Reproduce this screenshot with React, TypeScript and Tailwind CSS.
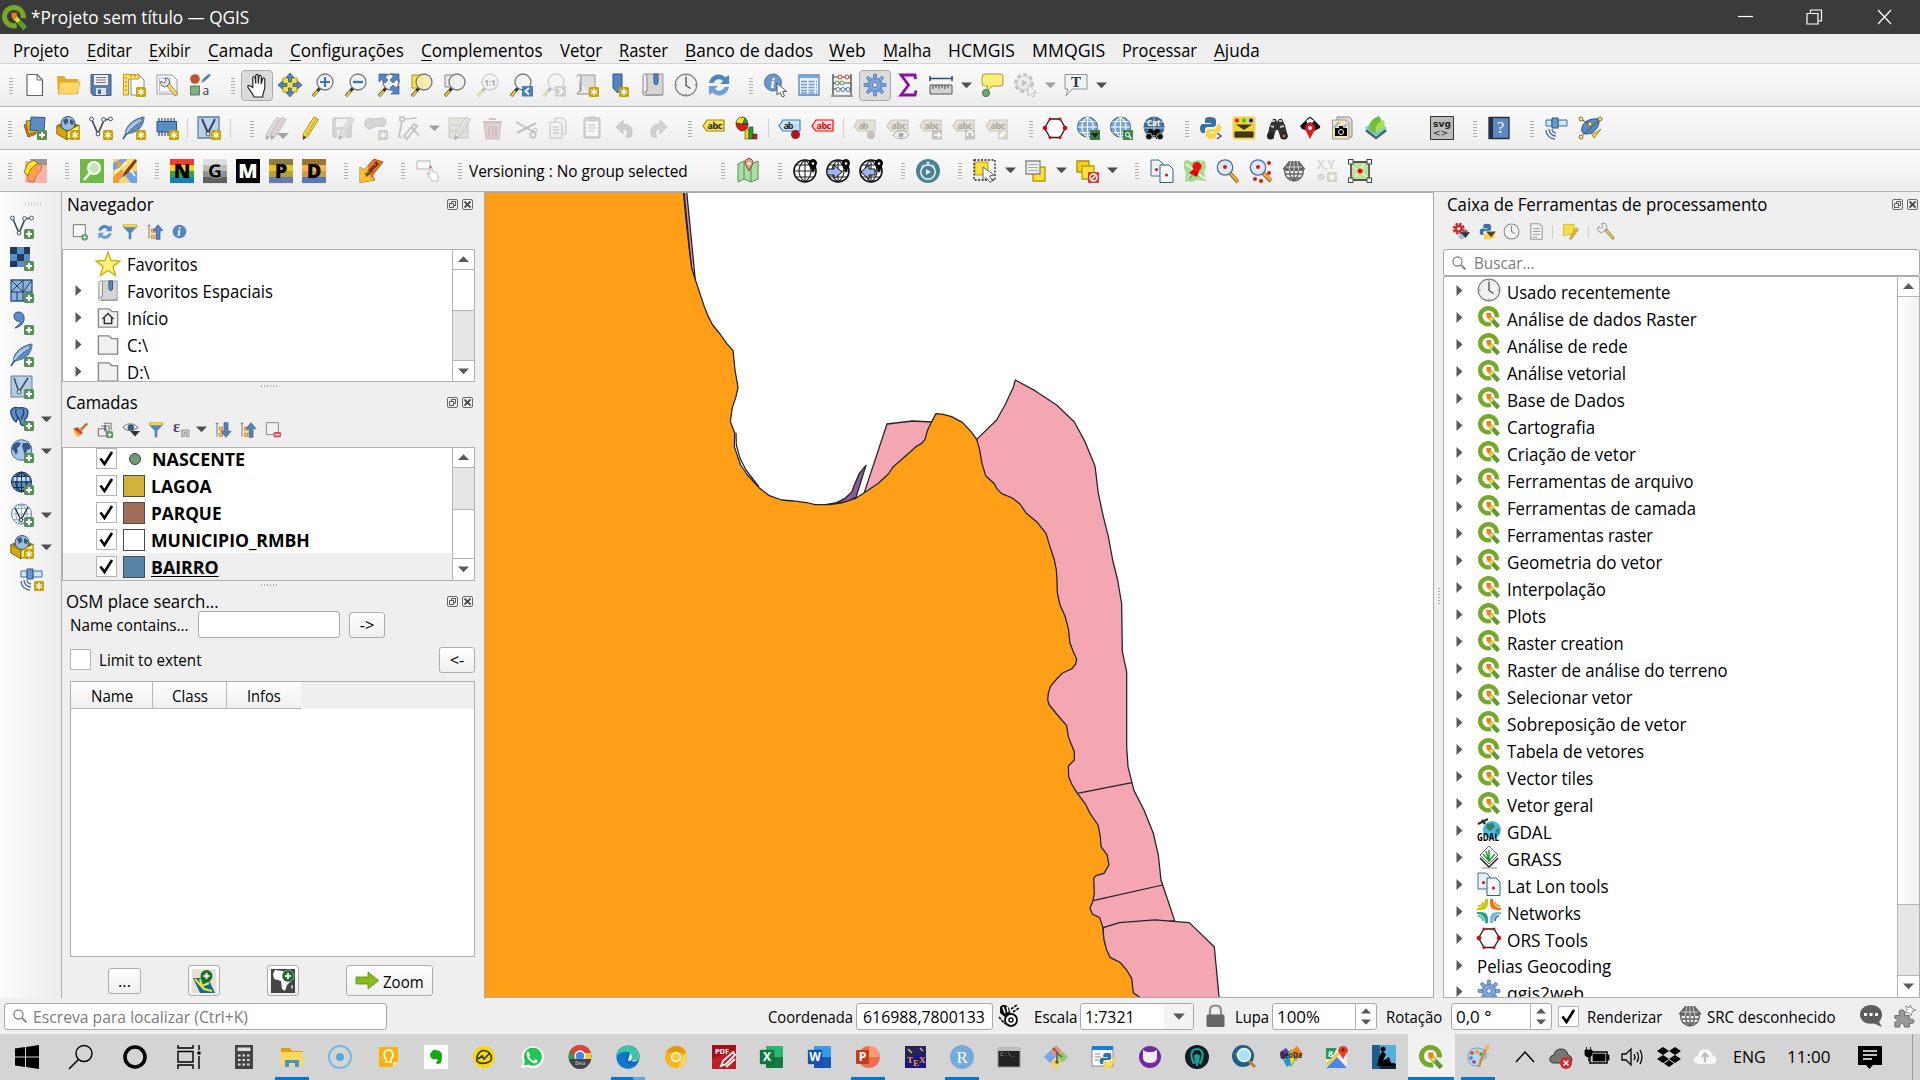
import React, { useLayoutEffect, useRef } from "react";

/* ---------- text ---------- */

type FitProps = { w?: number; children: React.ReactNode; className?: string };

/** Text condensed or widened horizontally to fill the given width. */
function Fit({ w, children, className = "" }: FitProps) {
  const inner = useRef<HTMLSpanElement>(null);
  useLayoutEffect(() => {
    const el = inner.current;
    if (!el || !w) return;
    el.style.transform = `scaleX(${w / el.offsetWidth})`;
  }, [w]);
  return (
    <span className={"inline-block shrink-0 whitespace-pre " + className} style={{ width: w }}>
      <span ref={inner} className="inline-block origin-left whitespace-pre">{children}</span>
    </span>
  );
}

/* ---------- icon primitives ---------- */

type P = { children?: React.ReactNode; s?: number; className?: string };
function I({ children, s = 24, className = "" }: P) {
  return (
    <svg width={s} height={s} viewBox="0 0 24 24" fill="none" className={"shrink-0 overflow-visible " + className}>
      {children}
    </svg>
  );
}

const Star = ({ x = 14, y = 14, c = "#c8a200" }) => (
  <g transform={`translate(${x} ${y})`}>
    <rect width="10" height="10" rx="1.5" fill={c} />
    <path d="M5 1.5V8.500M1.800 3.200L8.200 6.800M8.200 3.200L1.800 6.800" stroke="#fff" strokeWidth="1.300" />
  </g>
);
const Plus = ({ x = 14, y = 14 }) => (
  <g transform={`translate(${x} ${y})`}>
    <rect width="10" height="10" rx="1.500" fill="#55925a" />
    <path d="M5 2V8M2 5H8" stroke="#fff" strokeWidth="2" />
  </g>
);
const Lens = ({ f = "#eef1f3", faded = false }) => (
  <g opacity={faded ? 0.3 : 1}>
    <path d="M9 15L2 23" stroke="#333" strokeWidth="3.200" />
    <path d="M6.500 18L2.300 22.800" stroke="#f0d020" strokeWidth="2" />
    <circle cx="14" cy="9" r="8" fill={f} fillOpacity=".85" stroke="#777" strokeWidth="1.300" />
  </g>
);
const Globe = ({ f = "#7ba6d8", st = "#2f5680", g = "#fff" }) => (
  <g>
    <circle cx="11.500" cy="11" r="10" fill={f} stroke={st} />
    <path d="M1.500 11H21.500M3.500 5.500H19.500M3.500 16.500H19.500M11.500 1V21M11.500 1C4 6 4 16 11.500 21M11.500 1C19 6 19 16 11.500 21" stroke={g} strokeWidth="1.100" />
  </g>
);
const Earth = () => (
  <g>
    <circle cx="11.500" cy="11" r="10.300" fill="#a9c6e4" stroke="#4b6d92" />
    <path d="M3 6L7 3L11 4L9 8L7 9L8 12L6 16L4 12L2 10ZM13 4L18 4L21 8L19 11L17 10L16 15L14 14L13 10L12 7Z" fill="#33587f" />
  </g>
);
const VNodes = ({ c = "#44525e" }) => (
  <g>
    <path d="M2.500 3L9 18L15 4L21 3" stroke={c} strokeWidth="1.700" />
    {[[2.500, 3], [9, 18], [14.500, 3.500], [21.500, 3]].map(([x, y]) => (
      <circle key={x} cx={x} cy={y} r="1.900" fill="#fff" stroke={c} />
    ))}
  </g>
);
const Feather = () => (
  <g>
    <path d="M3 20C3 11 10 3 22 1C22 5 20 13 12 16L5 18Z" fill="#8fb3dc" stroke="#2f5680" />
    <path d="M4 20C6 12 13 6 22 1C22 6 19 13 12 16L5 18Z" fill="#5d89bf" />
    <path d="M1 23C4 15 10 9 19 4" stroke="#dce8f5" strokeWidth="1.200" />
    <path d="M1 23L5 17" stroke="#2f5680" strokeWidth="1.500" />
  </g>
);
const Pencil = ({ a = "#f5dc4a", b = "#b09000", x = 0 }) => (
  <g transform={`translate(${x} 0)`}>
    <path d="M16 1L20.500 3.500L10 20L5 23.500L5.500 17.500Z" fill={a} stroke={b} />
    <path d="M5 23.500L5.400 19.500L8.200 21.300Z" fill="#333" />
    <path d="M18.500 2.500L8 19" stroke={b} strokeWidth=".8" />
  </g>
);
const Tag = ({ f, st, tc, t = "abc", tw = 15 }: { f: string; st: string; tc: string; t?: string; tw?: number }) => (
  <g>
    <path d="M1 10L5 4H22V15H5Z" fill={f} stroke={st} strokeWidth="1.200" />
    <text x="5.500" y="12.500" fontSize="9" fontWeight="700" fontFamily="Open Sans" fill={tc} textLength={tw}>{t}</text>
  </g>
);
const FadedTag = ({ t = "abc", tw = 15 }) => <Tag f="#e3e1d8" st="#c9c7be" tc="#a8a69e" t={t} tw={tw} />;
const BoxPkg = () => (
  <g>
    <path d="M1 9L12 5L23 9L12 15Z" fill="#8a6d00" />
    <circle cx="12" cy="7.500" r="7" fill="#9dbbdc" stroke="#33587f" />
    <path d="M7 4L11 2L12.500 6L9 9ZM14 3L18 5.500L17 9L14 8Z" fill="#33587f" />
    <path d="M.8 9.500L11 15.500V23.800L.8 18Z" fill="#d6a900" stroke="#6b5600" strokeWidth=".8" />
    <path d="M11 15.500L23.200 9V17.500L11 23.800Z" fill="#ffec50" stroke="#6b5600" strokeWidth=".8" />
  </g>
);
const QLogo = ({ s = 24 }: { s?: number }) => (
  <I s={s}>
    <path d="M20.300 12.500A9 8.800 0 1 0 14 19.600" stroke="#77a829" strokeWidth="4.800" />
    <path d="M12 11.500L22.300 22.600" stroke="#5c9b2d" strokeWidth="4.800" />
    <path d="M12 11.500L16 15.800" stroke="#f3d43a" strokeWidth="3.800" />
    <path d="M9 7.500H14.500L13.500 13.500L9.500 12.500Z" fill="#f07d1a" />
  </I>
);
const Down = ({ c = "#4f4f4f", s = 12 }) => (
  <svg width={s} height={s / 2 + 1} viewBox="0 0 12 7" className="shrink-0"><path d="M0 .5H12L6 6.800Z" fill={c} /></svg>
);
const Up = ({ s = 12 }) => (
  <svg width={s} height={s / 2 + 1} viewBox="0 0 12 7" className="shrink-0"><path d="M0 6.500H12L6 .2Z" fill="#5a5a5a" /></svg>
);
const Clock = () => (
  <I>
    <circle cx="12" cy="12" r="10.800" fill="#f0f2f2" stroke="#7b8080" strokeWidth="1.200" />
    <path d="M12 4V12.500L16.500 15.500" stroke="#555" strokeWidth="1.400" />
    <path d="M12 2V3.500M12 20.500V22M2 12H3.500M20.500 12H22" stroke="#777" />
  </I>
);
const Refresh = ({ s = 24 }) => (
  <I s={s}>
    <path d="M2 10C3 4 8 1.500 12 1.500C15 1.500 17 3 18.500 4.500L22 2V11H13L16 8C13 5 8 6 6.500 10Z" fill="#4f86c6" />
    <path d="M22 14C21 20 16 22.500 12 22.500C9 22.500 7 21 5.500 19.500L2 22V13H11L8 16C11 19 16 18 17.500 14Z" fill="#6f9fd6" />
  </I>
);
const Gear = ({ c = "#7fa6d9", st = "#4a77b4", s = 24 }) => (
  <I s={s}>
    {[0, 45, 90, 135, 180, 225, 270, 315].map((a) => (
      <path key={a} d="M10 7L10.800 1H13.200L14 7Z" transform={`rotate(${a} 12 12)`} fill={c} stroke={st} strokeWidth=".8" />
    ))}
    <circle cx="12" cy="12" r="6.500" fill={c} stroke={st} strokeWidth=".8" />
    <circle cx="12" cy="12" r="2.400" fill="#eee" stroke={st} />
  </I>
);
const Hexagon = () => (
  <I>
    <path d="M7 3H17L22.500 12L17 21.500H7L1.500 12Z" stroke="#222" strokeWidth="1.300" fill="#fff" />
    {[[7, 3, 1.500], [17, 3, 1.500], [22, 12, 2.300], [17, 21.500, 1.500], [7, 21.500, 1.500], [2, 12, 2.300]].map(([x, y, r]) => (
      <circle key={`${x}-${y}`} cx={x} cy={y} r={r} fill="#e3000f" />
    ))}
  </I>
);
const Python = ({ s = 24, arrow = true }) => (
  <I s={s}>
    <path d="M11 1C7 1 6 2.500 6 4.500V7H12V8H4C2 8 1 10 1 12.500C1 15 2 17 4 17H6V14C6 12 7 11 9 11H14C16 11 17 10 17 8V4.500C17 2 15 1 11 1Z" fill="#3672a5" />
    <path d="M12 23C16 23 17 21.500 17 19.500V17H11V16H19C21 16 22 14 22 12C22 9.500 21 8 19 8H18V10C18 12 17 13 15 13H10C8 13 7 14 7 16V19.500C7 22 9 23 12 23Z" fill="#ffd343" />
    {arrow && <path d="M18 17L22 20L18 23" stroke="#555" strokeWidth="1.500" />}
  </I>
);
const Pages = () => (
  <I>
    <path d="M1 1H9L13 5V17H1Z" fill="#e9f1f7" stroke="#3d6f94" />
    <path d="M10 6H19L23 10V23.500H10Z" fill="#f3f8fb" stroke="#2f6289" />
    <circle cx="6.500" cy="10.500" r="1.500" fill="#e00" /><circle cx="16.500" cy="16" r="1.500" fill="#e00" />
  </I>
);
const WebGlobe = ({ arrow = "" }) => (
  <I>
    <circle cx="12" cy="12" r="11" fill="#fff" stroke="#111" strokeWidth="1.600" />
    <path d="M1 12H23M3 6H18M3 18H21M12 1V23M12 1C4 7 4 17 12 23M12 1C20 7 20 17 12 23" stroke="#222" strokeWidth="1.100" />
    <path d="M20 14L16.500 6A4 4 0 1 1 23.500 6Z" fill="#000" /><circle cx="20" cy="4.500" r="1.300" fill="#fff" />
    {arrow === "r" && <path d="M1 10H8V6L16 13L8 20V16H1Z" fill="#9db5f5" stroke="#111" />}
    {arrow === "l" && <path d="M16 10H10V6L2 13L10 20V16H16Z" fill="#9db5f5" stroke="#111" />}
  </I>
);
const Letter = ({ c, stripes, fg = "#000", halo = "none" }: { c: string; stripes: string[]; fg?: string; halo?: string }) => (
  <I>
    {stripes.map((s, i) => <rect key={i} x="0" y={(i * 24) / stripes.length} width="24" height={24 / stripes.length + 0.1} fill={s} />)}
    <text x="12" y="19" textAnchor="middle" fontSize="20" fontWeight="900" fontFamily="Open Sans" fill={fg} stroke={halo} strokeWidth=".6">{c}</text>
  </I>
);
const GreyGlobe = () => (
  <I>
    <circle cx="12" cy="12.500" r="9.300" fill="#eee" stroke="#666" strokeWidth="1.500" />
    <path d="M3 15H21M5 19H19M12 9V22M8 9C7 15 8 19 12 22M16 9C17 15 16 19 12 22" stroke="#666" strokeWidth="1.300" />
    <path d="M7 2H17L23.500 10L20 12H4L.5 10Z" fill="#666" />
    <path d="M4 8H20M9 2L7 12M15 2L17 12M12 2V12" stroke="#e8e8e8" strokeWidth=".8" />
  </I>
);
const Sat = ({ badge = false }) => (
  <I>
    <path d="M1 4H7V10H1ZM13 4H22V10H13Z" fill="#d5e5f5" stroke="#3b6da3" /><path d="M7 2H13V12H7Z" fill="#6b98cf" stroke="#2b5487" />
    <path d="M1 14C1 19 5 23 10 23M4 13C4 17 7 20 11 20M7 13C7 15 9 17 11 17" stroke="#4d7099" strokeWidth="1.400" />
    {badge && <Star />}
  </I>
);
const Book = ({ s = 24 }) => (
  <I s={s}>
    <path d="M5 1H22V22H5Z" fill="#d5d5d5" stroke="#999" /><path d="M2 3C2 .5 6 .5 6 3V18C5 18 2 20 2 21Z" fill="#eee" stroke="#888" />
    <path d="M2 21.500C2 23 4 22 22 22" stroke="#888" /><path d="M13 1H17V10L15 12L13 10Z" fill="#5b88bd" stroke="#2b5487" />
  </I>
);
const Binoc = () => (
  <g><path d="M4 23L7 13H10L12 15L14 13H17L21 23H14L13 19H11L10 23Z" fill="#111" /><circle cx="7" cy="20.500" r="3.300" fill="#111" stroke="#eee" strokeWidth=".7" /><circle cx="18" cy="20.500" r="3.300" fill="#111" stroke="#eee" strokeWidth=".7" /></g>
);

/* ---------- toolbar cells ---------- */

const C = ({ children }: { children: React.ReactNode }) => (
  <div className="flex h-full w-[33px] shrink-0 items-center justify-center">{children}</div>
);
const Pressed = ({ children }: { children: React.ReactNode }) => (
  <div className="flex h-full w-[33px] shrink-0 items-center justify-center">
    <div className="flex h-[31px] w-8 items-center justify-center rounded-sm border border-[#a9a9a9] bg-[#dcdcdc]">{children}</div>
  </div>
);
const A = ({ faded = false }) => (
  <div className="flex h-full w-[18px] shrink-0 items-center justify-center">
    <Down c={faded ? "#a0a0a0" : "#4f4f4f"} s={11} />
  </div>
);
function Grip({ w = 24 }: { w?: number }) {
  return (
    <div className="flex h-full shrink-0 items-center justify-end pr-[6px]" style={{ width: w }}>
      <div className="h-[17px] w-1 bg-[radial-gradient(#b0b0b0_0.7px,transparent_0.8px)] bg-[length:2px_3px]" />
    </div>
  );
}
const Sep = () => (
  <div className="flex h-full w-[9.5px] shrink-0 items-center justify-center"><div className="h-5 w-px bg-[#d2d2d2]" /></div>
);

function Toolbar({ children, short = false }: { children: React.ReactNode; short?: boolean }) {
  return (
    <div className={"flex shrink-0 items-center border-b border-[#b4b4b4] bg-gradient-to-b from-[#fbfbfb] to-[#ededed] " + (short ? "h-[42px]" : "h-[43px]")}>
      {children}
    </div>
  );
}

/* ---------- the three toolbars ---------- */

function ToolbarOne() {
  return (
    <Toolbar>
      <Grip w={18.5} />
      <C><I><path d="M4 1.500H14L19.500 7V22.500H4Z" fill="#fff" stroke="#666" strokeWidth="1.200" /><path d="M14 1.500V7H19.500" stroke="#666" /></I></C>
      <C><I><path d="M1 3H8L10 6H22V21H2Z" fill="#e3ab2c" /><path d="M4 9H24L21 21H2Z" fill="#ffd868" stroke="#dba322" strokeWidth=".7" /></I></C>
      <C><I><path d="M2 1.500H22V22.500H4L2 20Z" fill="#5a7fae" stroke="#3f5f88" /><path d="M5 2H19V12H5Z" fill="#f1f1f1" /><path d="M7 4.500H17M7 7H17M7 9.500H17" stroke="#777" /><path d="M7 15H17V22H7Z" fill="#dfe3e8" /><path d="M9 16.500H12V21H9Z" fill="#4a668c" /></I></C>
      <C><I><path d="M9 3H18L22 7V22H9Z" fill="#fff" stroke="#888" /><path d="M1.500 1.500H17V6H6.500V22H1.500Z" fill="#ffe070" stroke="#c39a10" /><path d="M3 5H5M3 9H5M3 13H5M3 17H5M9 2V4M13 2V4" stroke="#a17d00" /><Star /></I></C>
      <C><I><path d="M2 2H17L22 7V21H2Z" fill="#fff" stroke="#999" /><path d="M4.500 5H15V19H4.500Z" stroke="#a9bbe8" /><path d="M11 12L20 23L23 21L14 10Z" fill="#f0d96a" stroke="#7a6a30" strokeWidth=".7" /><path d="M6 8A4 4 0 0 0 12 13L14 11A4 4 0 0 0 10 5L11 8.500L9 10Z" fill="#e8e8e8" stroke="#666" /></I></C>
      <C><I><circle cx="7" cy="6" r="4.800" fill="#c4532d" /><path d="M20.500 1L23 2L17 8L13 10L15 6Z" fill="#4f7fb5" /><path d="M2.500 13H11.500V22H2.500Z" fill="#7fb183" stroke="#54805a" /><text x="14.500" y="22" fontSize="12" fontFamily="Open Sans" fill="#333">a</text></I></C>
      <Grip w={24} />
      <Pressed><I s={25}><path d="M7.500 14V4.500C7.500 3 9.500 3 9.700 4.500L10.300 10V2.500C10.500 1 12.500 1 12.700 2.500V10L13.500 3C14 1.700 15.600 2 15.600 3.500L15.500 10.500L17 5.500C17.500 4.300 19 4.600 19 6V14C19 17 17 18 17 23H8.500C8 20 5 17.500 3 14C2 12 4 11.500 5 12.500Z" fill="#fff" stroke="#222" strokeWidth="1.100" /></I></Pressed>
      <C><I><path d="M5 5H19V19H5Z" fill="#f7e13f" stroke="#b59b00" />{[0, 90, 180, 270].map((a) => <path key={a} d="M12 0L16 4.500H13.500V9H10.500V4.500H8Z" transform={`rotate(${a} 12 12)`} fill="#4f86c6" stroke="#2b5487" strokeWidth=".7" />)}</I></C>
      <C><I><Lens /><path d="M14 4V14M9 9H19" stroke="#3a74b8" strokeWidth="2.200" /></I></C>
      <C><I><Lens /><path d="M9 9H19" stroke="#3a74b8" strokeWidth="2.400" /></I></C>
      <C><I><Lens />{[[2, 1, 0], [22, 1, 90], [22, 21, 180]].map(([x, y, r]) => <path key={r} d="M0 0H8L5.500 2.500L9 6L6 9L2.500 5.500L0 8Z" transform={`translate(${x} ${y}) rotate(${r})`} fill="#4f86c6" stroke="#2f5c90" strokeWidth=".7" />)}</I></C>
      <C><I><path d="M2 2H12V15H2Z" fill="#f8e34a" stroke="#a99000" /><Lens f="#f4ebae" /></I></C>
      <C><I><path d="M2 2H11V14H2Z" fill="#e8e8e8" stroke="#888" /><Lens /></I></C>
      <C><I><Lens faded /><text x="8" y="12.500" fontSize="9" fontWeight="700" fontFamily="Open Sans" fill="#aaa" textLength="12">1:1</text></I></C>
      <C><I><Lens /><path d="M13 13H24V23.500H13Z" fill="#4a7fbf" /><path d="M20 15L16.500 18.300L20 21.500" stroke="#fff" strokeWidth="1.800" /></I></C>
      <C><I><Lens faded /><path d="M13 13H24V23.500H13Z" fill="#cfcfcf" /><path d="M17 15L20.500 18.300L17 21.500" stroke="#fff" strokeWidth="1.800" /></I></C>
      <C><I><path d="M5 2H20V20H5Z" fill="#ddd" stroke="#999" /><path d="M2 4C2 1 6 1 6 4V18C4 18 2 20 2 21H14" fill="#eee" stroke="#888" /><Star /></I></C>
      <C><I><path d="M5 1H14V15L9.500 20L5 15Z" fill="#4f86c6" stroke="#2b5487" /><Star x={11} /></I></C>
      <C><Book /></C>
      <C><Clock /></C>
      <C><Refresh /></C>
      <Grip w={23.5} />
      <C><I><circle cx="9" cy="9.500" r="8.500" fill="#6a97cb" stroke="#4674ab" /><text x="6.500" y="15" fontSize="15" fontWeight="700" fontStyle="italic" fontFamily="Liberation Serif" fill="#fff">i</text><path d="M13 10V22L16 19.500L18.500 24L20.500 23L18.500 18.500H22.500Z" fill="#fff" stroke="#555" /></I></C>
      <C><I><path d="M2 2H22V22H2Z" fill="#e9f1fa" stroke="#5584bd" strokeWidth="1.300" /><path d="M2 2H22V5H2Z" fill="#78a3d8" /><path d="M4 8.500H20M4 11.500H20M4 14.500H20M4 17.500H20M4 20H20" stroke="#6f9cd1" strokeWidth="1.300" strokeDasharray="6 1.500" /></I></C>
      <C><I><path d="M3 1V22M21 1V22" stroke="#444" strokeWidth="1.300" /><path d="M1 23H23M3 4H21M3 10H21M3 16H21" stroke="#444" /><circle cx="10" cy="4" r="2" fill="#fff" stroke="#c33" /><circle cx="17" cy="4" r="2" fill="#fff" stroke="#c33" /><circle cx="7" cy="10" r="2" fill="#fff" stroke="#494" /><circle cx="12" cy="10" r="2" fill="#fff" stroke="#494" /><circle cx="8" cy="16.500" r="2" fill="#fff" stroke="#47a" /><circle cx="13" cy="16.500" r="2" fill="#fff" stroke="#47a" /><circle cx="18" cy="16.500" r="2" fill="#fff" stroke="#47a" /></I></C>
      <Pressed><Gear /></Pressed>
      <C><I><path d="M19.500 6L19 2H5L12.500 12L5 22H19L20 17.500" stroke="#8b0fa0" strokeWidth="2.800" /></I></C>
      <C><I><path d="M1 5.500H23M1 3V8M23 3V8" stroke="#2e4d72" strokeWidth="1.600" /><path d="M1 12H23V21H1Z" fill="#d2d2d2" stroke="#555" /><path d="M4 12V16M7 12V15M10 12V16M13 12V15M16 12V16M19 12V15" stroke="#444" /></I></C>
      <A />
      <C><I><path d="M5 1H20Q23 1 23 4V10Q23 13 20 13H12L6 19L8 13H5Q2 13 2 10V4Q2 1 5 1Z" fill="#fdee77" stroke="#b59b20" /><circle cx="6" cy="20" r="3.600" fill="#6da574" stroke="#42784a" /></I></C>
      <C><I className="opacity-30"><circle cx="11" cy="10" r="8.500" stroke="#555" strokeWidth="3" strokeDasharray="4 2.500" /><circle cx="11" cy="10" r="7" fill="#ddd" stroke="#555" /><path d="M9 6.500V13.500L14.500 10Z" fill="#555" /><path d="M15 12V23L17.500 20.500L20 24L21.500 23L20 19.500H23.500Z" fill="#fff" stroke="#555" /></I></C>
      <A faded />
      <C><I><path d="M1 1.500H23V16H8L2 23L4 16H1Z" fill="#edf3f6" stroke="#8a979e" /><text x="7" y="14" fontSize="15" fontWeight="700" fontFamily="Liberation Serif" fill="#333">T</text></I></C>
      <A />
    </Toolbar>
  );
}

function ToolbarTwo() {
  return (
    <Toolbar>
      <Grip w={18} />
      <C><I><path d="M1 9L9 6L13 18L5 21Z" fill="#e07b2c" stroke="#9c4c10" /><path d="M3 5L13 4L15 16L5 18Z" fill="#dbb02a" stroke="#8c6f10" /><path d="M8 1L22 1.500L21 15L7 14Z" fill="#5d8cc4" stroke="#31588c" /><Plus /></I></C>
      <C><I><BoxPkg /><Star /></I></C>
      <C><I><VNodes /><Star /></I></C>
      <C><I><Feather /><Star /></I></C>
      <C><I><path d="M4 2V20M7 2V20M10 2V20M13 2V20M16 2V20M19 2V20" stroke="#2b5487" strokeWidth="1.200" /><path d="M2 5.500H21.500V16H2Z" fill="#5d8cc4" stroke="#2b5487" /><Star /></I></C>
      <Sep />
      <C><I><path d="M1 1H22V22H1Z" fill="#bcd1e8" stroke="#5b7fa8" strokeWidth="1.300" /><path d="M5 3L11 17L18 3" stroke="#2c4769" strokeWidth="2" /><circle cx="11" cy="18" r="2" fill="#fff" stroke="#2c4769" /><Star /></I></C>
      <Sep />
      <Grip w={25} />
      <C><I className="opacity-40"><Pencil a="#bbb" b="#777" x={-4} /><Pencil a="#ccaaaa" b="#777" x={1} /><path d="M12 17H24L18 23Z" fill="#333" /></I></C>
      <C><I><Pencil /></I></C>
      <C><I className="opacity-40"><path d="M2 2H20V21H2Z" fill="#aaa" stroke="#777" /><path d="M5 3H17V11H5ZM6 14H15V21H6Z" fill="#eee" /><Pencil a="#ccc" b="#888" x={3} /></I></C>
      <C><I className="opacity-40"><path d="M1 9C0 4 4 1 9 3C13 4 17 0 21 3C24 7 20 12 15 10C11 9 9 12 6 13C3 13 2 11 1 9Z" fill="#aaa" stroke="#777" /><Star c="#999580" /></I></C>
      <C><I className="opacity-40"><path d="M3 1H7V5H3ZM7 3L20 2M5 5L2 20L4 22M7 20L17 8L20 10L10 23ZM14 10L22 20" stroke="#777" strokeWidth="1.700" /></I></C>
      <A faded />
      <C><I className="opacity-40"><path d="M1 2H20V22H1ZM1 9H20M1 15H20" fill="#c9ccb8" stroke="#888" /><Pencil a="#ddd" b="#777" x={2} /></I></C>
      <C><I className="opacity-40"><path d="M3 7H20L18 23H5Z" fill="#bf9a9a" stroke="#977" /><path d="M2 6H21M8 3H15M8 10V20M12 10V20M15 10V20" stroke="#977" strokeWidth="2" /></I></C>
      <C><I className="opacity-40"><path d="M2 6L20 16M3 17L22 7" stroke="#777" strokeWidth="2" /><circle cx="19" cy="19" r="2.700" stroke="#777" strokeWidth="1.500" /><circle cx="21" cy="14" r="2" stroke="#777" /></I></C>
      <C><I className="opacity-40"><path d="M8 2H16L19 5V18H8Z" fill="#eee" stroke="#777" /><path d="M3 6H12L15 9V22H3Z" fill="#eee" stroke="#777" /><path d="M6 11H12M6 14H12M6 17H12" stroke="#777" /></I></C>
      <C><I className="opacity-40"><path d="M4 2H20V22H4Z" fill="#aaa" stroke="#777" /><path d="M6 5H18V20H6Z" fill="#fff" /><path d="M9 1H15V5H9ZM8 9H16M8 12H16M8 15H14" stroke="#777" /></I></C>
      <C><I className="opacity-35"><path d="M3 11L10 4V8C17 8 21 12 18 21H13C16 16 14 13 10 13V18Z" fill="#888" stroke="#777" /></I></C>
      <C><I className="opacity-35"><path d="M21 11L14 4V8C7 8 3 12 6 21H11C8 16 10 13 14 13V18Z" fill="#999" stroke="#777" /></I></C>
      <Grip w={23.5} />
      <C><I><Tag f="#f8e14c" st="#a18c10" tc="#222" /></I></C>
      <C><I><path d="M7 1A7 7 0 0 1 13 8L7 8Z" fill="#1fa51f" stroke="#222" strokeWidth=".6" /><path d="M1 7A6 6 0 0 1 10 2L7 9Z" fill="#f8df20" stroke="#222" strokeWidth=".6" /><path d="M1 7L7 8L13 8C13 12 11 15 7 15C3 14 1 11 1 7Z" fill="#e01818" stroke="#222" strokeWidth=".6" /><path d="M10 13H14V23H10Z" fill="#f4d30c" stroke="#222" strokeWidth=".5" /><path d="M14 11H18V23H14Z" fill="#1e9e2c" stroke="#222" strokeWidth=".5" /><path d="M18 18H22V23H18Z" fill="#e01818" stroke="#222" strokeWidth=".5" /></I></C>
      <Sep />
      <C><I><Tag f="#cfe3fb" st="#2a86d8" tc="#222" t="ab" tw={10} /><path d="M17.500 8V17" stroke="#c9d3dd" strokeWidth="3" /><circle cx="17.500" cy="18.500" r="4.500" fill="#b0161c" /></I></C>
      <C><I><Tag f="#fde0e0" st="#f00" tc="#e00000" /></I></C>
      <Sep />
      <C><I><FadedTag t="ab" tw={10} /><circle cx="18" cy="19" r="4" fill="#c9bcbc" /></I></C>
      <C><I><FadedTag /><path d="M7 19C11 13 19 13 23 19C19 24 11 24 7 19Z" fill="#eee" stroke="#aaa" /><circle cx="15" cy="19" r="2.500" fill="#aaa" /></I></C>
      <C><I><FadedTag /><path d="M13 14H23V23.500H13Z" fill="#c4c3bd" /><path d="M15 19H21M19 16.500L21.500 19L19 21.500" stroke="#fff" strokeWidth="1.500" /></I></C>
      <C><I><FadedTag /><path d="M13 14H23V23.500H13Z" fill="#c4c3bd" /><path d="M16 20A2.700 2.700 0 1 1 20 20" stroke="#fff" strokeWidth="1.500" /></I></C>
      <C><I><FadedTag /><path d="M13 14H23V23.500H13Z" fill="#d8d5c8" /><path d="M15 21L20 16" stroke="#fff" strokeWidth="2.500" /></I></C>
      <Grip w={25} />
      <C><Hexagon /></C>
      <C><I><Globe /><path d="M14 14H24V24H14Z" fill="#3e7a48" /><path d="M15 17H23L19 22Z" fill="#222" /></I></C>
      <C><I><Globe /><path d="M14 14H24V24H14Z" fill="#3f8a4c" /><circle cx="18.500" cy="18.500" r="2" stroke="#fff" /><path d="M20 20L22.500 22.500" stroke="#fff" strokeWidth="1.500" /></I></C>
      <C><I><circle cx="12" cy="11" r="10.500" fill="#46698f" /><path d="M3 6H21M2 12H22M12 1V20" stroke="#b5cbe4" /><text x="5" y="10" fontSize="8" fontWeight="700" fontFamily="Open Sans" fill="#fff">Cat</text><Binoc /></I></C>
      <Grip />
      <C><Python /></C>
      <C><I><rect x=".5" y=".5" width="23" height="23" rx="3" fill="#efd33e" /><circle cx="5" cy="4.500" r="2" fill="#e11" /><circle cx="12" cy="4.500" r="2" fill="#1d1" /><circle cx="19" cy="4.500" r="2" fill="#11e" /><path d="M4 8.500H20L12 14Z" fill="#403a10" /><path d="M3 16H21V21H3Z" fill="#403a10" stroke="#222" /></I></C>
      <C><I><path d="M2 21L5 9L8 3H11L12 6L14 3H17L20 9L23 21L16 23L13 14H11L8 23Z" fill="#333" /><circle cx="5.500" cy="20" r="3.500" fill="#222" /><circle cx="19" cy="20" r="3.500" fill="#222" /><circle cx="19" cy="20" r="1.700" fill="#c06820" /><path d="M7 5H10M14 5H17M6 10L9 11M15 11L19 10" stroke="#bbb" strokeWidth="2" /></I></C>
      <C><I><path d="M2 10L10 2Q12 0 14 2L22 10Q23 12 20 13L14 16L4 13Z" fill="#111" /><path d="M8 5L12 2L16 5L14 7L12 6L10 8Z" fill="#fff" /><path d="M12 23L7.500 14A5 5 0 1 1 16.500 14Z" fill="#e8141c" /><circle cx="12" cy="12" r="2" fill="#fff" /></I></C>
      <C><I><path d="M6 1H18L21 4V21H6Z" fill="#ddd" stroke="#888" /><path d="M1.500 4H15L18 7V23H1.500Z" fill="#f8e2b6" stroke="#998" /><path d="M3 12L8 6M4 20L16 8" stroke="#89b7d8" strokeWidth="2" /><path d="M4 12H16V20H4ZM8 10H12V12H8Z" fill="#000" /><circle cx="10" cy="16" r="2.500" stroke="#fff" /></I></C>
      <C><I><path d="M1 15L12 23.500L23 15L19 12H5Z" fill="#3c5c66" /><path d="M1 12L12 21L23 12L12 4Z" fill="#74c5cf" /><path d="M6 15C3 7 9 2 15 0C20 7 19 14 10 17Z" fill="#6dbf3d" /><path d="M12 17C10 11 14 6 20 4C22 10 19 15 12 17Z" fill="#a9dc5a" /></I></C>
      <div className="w-[33px] shrink-0" />
      <C><I><path d="M.5 .5H23.500V23.500H.5Z" fill="#bcbcbc" stroke="#333" /><text x="3" y="11" fontSize="9" fontWeight="700" fontFamily="DejaVu Sans" fill="#222" textLength="18">svg</text><text x="3" y="20" fontSize="9" fontFamily="DejaVu Sans" fill="#222">&lt;&gt;</text></I></C>
      <Grip />
      <C><I><path d="M2 1.500H22V22.500H2Z" fill="#5b8ac3" stroke="#27313c" strokeWidth="1.300" /><path d="M2 1.500H6V22.500H2Z" fill="#26303c" /><text x="10" y="17" fontSize="16" fontFamily="Liberation Serif" fill="#fff">?</text></I></C>
      <Grip w={24.5} />
      <C><Sat /></C>
      <C><I><path d="M4 12C5 6 11 2 21 3C22 9 18 17 9 18C4 18 3 15 4 12Z" fill="#5b8ac3" stroke="#2b5487" /><path d="M3 21L22 3M3 3L12 9" stroke="#456" />{[[3, 3], [22, 3], [12, 8], [3, 21]].map(([x, y]) => <circle key={`${x}-${y}`} cx={x} cy={y} r="2" fill="#f8ea6a" stroke="#7d7430" />)}<path d="M13 17L16 22L23 13L17 17Z" fill="#f4d838" stroke="#7a6500" strokeWidth=".7" /></I></C>
    </Toolbar>
  );
}

function ToolbarThree() {
  return (
    <Toolbar short>
      <Grip w={18} />
      <C><I><path d="M2 2H24V24H2Z" fill="#ffb0a8" /><path d="M6 0H24V6H14Z" fill="#999" /><path d="M1 13L5 4L11 1L15 5L8 10L5 17Z" fill="#fbe808" stroke="#555" strokeWidth=".8" /><path d="M5 22C4 12 10 5 17 5L19 8C18 13 14 14 12 20L11 23Z" fill="#ff9e4a" stroke="#777" strokeWidth=".8" /></I></C>
      <Grip />
      <C><I><path d="M0 0H24V24H0Z" fill="#6fbb45" /><circle cx="14" cy="9" r="6" fill="#c7e6b6" stroke="#fff" strokeWidth="2" /><path d="M10 14L4 21" stroke="#fff" strokeWidth="2.500" /></I></C>
      <C><I><path d="M0 0H24V24H0Z" fill="#f6d96b" /><path d="M0 4L8 0H14L6 9L0 11ZM10 14L18 24H24V12Z" fill="#6fa3e6" /><path d="M0 18L9 10L12 16L5 24H0ZM4 3H9V8H4Z" fill="#f39b31" /><path d="M2 14L14 3M7 22L17 10L22 17" stroke="#fff" strokeWidth="1.500" /><path d="M22 0L12 12L9 19L15 14L24 2Z" fill="#8a3a10" /></I></C>
      <Grip />
      <C><Letter c="N" stripes={["#f03c2d", "#f7ce1b", "#35a24a", "#1580b0"]} /></C>
      <C><Letter c="G" stripes={["#dedede", "#bdbdbd", "#909090", "#606060"]} halo="#ddd" /></C>
      <C><Letter c="M" stripes={["#000"]} fg="#fff" /></C>
      <C><Letter c="P" stripes={["#8c7f3e", "#e8c41f", "#b5a13a", "#6a7ab0"]} /></C>
      <C><Letter c="D" stripes={["#9b742e", "#f3b64e", "#cf9a45", "#5a79b8"]} /></C>
      <Grip />
      <C><I><path d="M1 8L5 11L15 0L24 3L13 17L16 21L1 23.500Z" fill="#f5731c" stroke="#7a3300" strokeWidth=".7" /><path d="M1 8L5 11L9 7L12 18L16 21L1 23.500Z" fill="#f8c02c" /><text transform="translate(8 18) rotate(-48)" fontSize="6.500" fontWeight="700" fontFamily="Liberation Sans" fill="#111" textLength="18">azimut</text></I></C>
      <Grip />
      <C><I><path d="M1 2H14V10H1Z" fill="#fafafa" stroke="#b5b5b5" /><path d="M14 8V15L11 14L16 22H22V16Q22 13 16 12V9Z" fill="#fff" stroke="#bbb" /><circle cx="14.500" cy="8" r="1.200" fill="#d66" /></I></C>
      <Grip />
      <div className="w-[239px] shrink-0 pt-0.5 pl-px"><Fit w={219} className="text-[17px]">Versioning : No group selected</Fit></div>
      <Grip />
      <C><I><path d="M2 5L8 2L15 5L22 2V20L15 23L8 20L2 23Z" fill="#a8e0a4" stroke="#5b8a5a" /><path d="M8 2V20M15 5V23" stroke="#5b8a5a" /><path d="M13 12L9.500 5.500A4 4 0 1 1 16.500 5.500Z" fill="#f0a080" stroke="#7a4a35" /><circle cx="13" cy="4.500" r="1.500" fill="#fff" /></I></C>
      <Grip />
      <C><WebGlobe /></C>
      <C><WebGlobe arrow="r" /></C>
      <C><WebGlobe arrow="l" /></C>
      <Grip />
      <C><I><circle cx="12" cy="12" r="12" fill="#4a8291" /><circle cx="12" cy="13" r="7.200" stroke="#d7e9ec" strokeWidth="1.700" /><path d="M10.500 3.500H13.500M12 4V6M6 6.500L7.500 8M18 6.500L16.500 8" stroke="#d7e9ec" strokeWidth="1.600" /><path d="M10 10V16L15 13Z" fill="#d7e9ec" /></I></C>
      <Grip />
      <C><I><path d="M2 3H15V16H2Z" fill="#f8df3c" stroke="#b89b00" /><path d="M1 1H22V21H1Z" stroke="#222" strokeDasharray="2 1.500" strokeWidth="1.300" /><path d="M10 8V21L13.500 18.500L17 23.500L19.500 22L16.500 17L21 16Z" fill="#fff" stroke="#666" /></I></C>
      <A />
      <C><I><path d="M9 8H21V22H9Z" fill="#f8df3c" stroke="#b89b00" strokeWidth="1.400" /><path d="M2 2H16V15H2Z" fill="#eef0f0" stroke="#888" strokeWidth="1.400" /><path d="M4 5.500H14M4 8.500H14M4 11.500H14" stroke="#aaa" /></I></C>
      <A />
      <C><I><path d="M2 2H14V13H2Z" fill="#f0d21e" stroke="#a98f00" strokeWidth="1.300" /><path d="M7 7H19V20H7Z" fill="#f8df3c" stroke="#b89b00" strokeWidth="1.300" /><rect x="13" y="13" width="11" height="11" rx="1" fill="#e0353b" /><circle cx="18.500" cy="18.500" r="3.500" stroke="#fff" strokeWidth="1.400" /><path d="M16 21L21 16" stroke="#fff" strokeWidth="1.400" /></I></C>
      <A />
      <Grip />
      <C><Pages /></C>
      <C><I><path d="M1 2L5 1L9 3L14 1L22 2L23 8L21 13L23 22L14 21L9 23L2 22L3 14L1 9Z" fill="#a5d98c" /><path d="M3 5L22 20M5 20L18 3" stroke="#e7f5d8" strokeWidth="2" /><path d="M11 10L6 14L14 18L16 12Z" fill="#d00" /><path d="M10 15L6 20" stroke="#888" strokeWidth="1.500" /><circle cx="14" cy="7.500" r="4.500" fill="#ee1111" /></I></C>
      <C><I><path d="M13 13L22 23" stroke="#8a5a10" strokeWidth="4" /><path d="M14 14L22 22.500" stroke="#f1a93a" strokeWidth="2.500" /><circle cx="9" cy="8.500" r="7.700" fill="#dbe9fb" stroke="#4d6f98" strokeWidth="1.300" /><circle cx="9" cy="8" r="2" fill="#e11" /></I></C>
      <C><I><path d="M13 13L22 22" stroke="#8a5a10" strokeWidth="4" /><path d="M14 14L22 21.500" stroke="#f1a93a" strokeWidth="2.500" /><circle cx="9" cy="8.500" r="7.700" fill="#dbe9fb" stroke="#4d6f98" strokeWidth="1.300" />{[[9, 8], [20, 4], [6, 20], [12, 22], [20, 14]].map(([x, y]) => <circle key={`${x}-${y}`} cx={x} cy={y} r="2" fill="#e11" />)}</I></C>
      <C><GreyGlobe /></C>
      <C><I className="opacity-60"><text x="2" y="10" fontSize="12" fontWeight="700" fontFamily="Open Sans" fill="#c5c5c5" textLength="18">X,Y</text><circle cx="6" cy="18" r="2.800" fill="#d5d5d5" stroke="#aaa" /><Star c="#c2bfae" x={12} y={13} /></I></C>
      <C><I><path d="M3 3H21V21H3Z" fill="#b9e49c" stroke="#555" strokeWidth="1.800" /><path d="M5 8L19 18M7 18L16 5" stroke="#e8f5d8" strokeWidth="1.500" />{[[0.5, 0.5], [19, 0.5], [0.5, 19], [19, 19]].map(([x, y]) => <rect key={`${x}-${y}`} x={x} y={y} width="4.500" height="4.500" fill="#fff" stroke="#444" />)}<circle cx="12" cy="12" r="2.500" fill="#f00" /></I></C>
    </Toolbar>
  );
}

/* ---------- title and menu ---------- */

const menus: [string, number, number, number][] = [
  ["Projeto", 3, 56, 17.5], ["Editar", 0, 45, 17.5], ["Exibir", 0, 42, 17], ["Camada", 0, 65, 17], ["Configurações", 0, 114, 17],
  ["Complementos", 0, 122, 17], ["Vetor", 3, 42, 16.5], ["Raster", 0, 49, 17], ["Banco de dados", 0, 128, 16.5], ["Web", 0, 37, 17],
  ["Malha", 0, 48, 17], ["HCMGIS", -1, 67, 17], ["MMQGIS", -1, 73, 17], ["Processar", 3, 75, 17], ["Ajuda", 0, 46, 0],
];

function TitleBar() {
  return (
    <div className="flex h-[34px] shrink-0 items-center bg-[#3b3b3b] text-white">
      <div className="ml-0.5"><QLogo s={25} /></div>
      <Fit w={218} className="ml-1 mt-px text-[17.5px]">*Projeto sem título — QGIS</Fit>
      <div className="flex-1" />
      <svg width="155" height="16" viewBox="-5 0 155 16" className="mr-[28px] shrink-0" fill="none" stroke="#fff" strokeWidth="1.2">
        <path d="M-4 7.500H11" />
        <path d="M65 4.500H76V15H65ZM68.500 4.500V1H79.500V12H76" />
        <path d="M136 1L149 15M149 1L136 15" />
      </svg>
    </div>
  );
}

function MenuBar() {
  return (
    <div className="flex h-[30px] shrink-0 items-center border-b border-[#d4d4d4] bg-[#efefef] pl-[13px] pt-[3px] text-[17.5px]">
      {menus.map(([t, u, w, gap]) => (
        <div key={t} className="shrink-0" style={{ marginRight: gap }}>
          <Fit w={w}>
            {u < 0 ? t : <>{t.slice(0, u)}<span className="underline decoration-1 underline-offset-[3px]">{t[u]}</span>{t.slice(u + 1)}</>}
          </Fit>
        </div>
      ))}
    </div>
  );
}

/* ---------- left side ---------- */

function SideTool({ children, arrow = false }: { children: React.ReactNode; arrow?: boolean }) {
  return (
    <div className="flex h-8 w-full shrink-0 items-center pl-[10px]">
      {children}
      {arrow && <div className="ml-[7px]"><Down s={11} /></div>}
    </div>
  );
}

function SideBar() {
  return (
    <div className="flex w-[62px] shrink-0 flex-col overflow-hidden border-r border-[#b0b0b0] bg-gradient-to-r from-[#fcfcfc] to-[#ececec]">
      <div className="ml-6 mt-[10px] h-1 w-[17px] shrink-0 bg-[radial-gradient(#b0b0b0_0.7px,transparent_0.8px)] bg-[length:3px_2px]" />
      <div className="h-[5px] shrink-0" />
      <SideTool><I><VNodes /><Plus /></I></SideTool>
      <SideTool><I><path d="M0 0H20V20H0Z" fill="#5d8cc4" /><path d="M0 0H7V7H0ZM14 0H20V7H14ZM7 7H14V14H7ZM0 14H7V20H0Z" fill="#1e3a5f" /><Plus /></I></SideTool>
      <SideTool><I><path d="M1 1H22V22H1Z" fill="#8db1da" stroke="#2b5487" strokeWidth="1.300" /><path d="M1 13H22M13 1V22M1 1L13 13M13 1L1 13M13 13L22 1M7 13V22" stroke="#1f3f66" /><Plus /></I></SideTool>
      <SideTool><I><path d="M4 5C4 0 13 -1 14 6C15 12 10 16 5 17C10 13 11 11 10 10C7 11 4 9 4 5Z" fill="#5d8cc4" stroke="#2b5487" /><Plus /></I></SideTool>
      <SideTool><I><Feather /><Plus /></I></SideTool>
      <SideTool><I><path d="M1 1H22V22H1Z" fill="#b9cde2" stroke="#5b7fa8" /><path d="M4 3L9 17L18 3" stroke="#35526f" strokeWidth="1.600" /><circle cx="9" cy="17" r="2" fill="#fff" stroke="#35526f" /><Plus /></I></SideTool>
      <SideTool arrow><I><path d="M1 3C3 0 7 0 9 1C13 0 17 1 18 4C18 8 17 11 15 12V17C13 20 10 18 10 14L8 11L6 15C2 12 0 6 1 3Z" fill="#5d8cc4" stroke="#24466e" strokeWidth="1.300" /><path d="M6 2C5 8 7 10 9 11M13 2C15 6 13 9 11 12" stroke="#1f3f66" strokeWidth="1.200" /><Plus /></I></SideTool>
      <SideTool arrow><I><Earth /><Plus /></I></SideTool>
      <SideTool><I><Globe f="#5d8cc4" st="#17324f" g="#17324f" /><path d="M4 6H19V10H4Z" fill="#c7dcf2" /><path d="M11.500 1V20M7 3V19M16 3V19" stroke="#17324f" /><Plus /></I></SideTool>
      <SideTool arrow><I><Globe f="#fff" st="#4d80b8" g="#8bb0d8" /><path d="M5 5L11 17L18 4" stroke="#333" strokeWidth="1.400" /><circle cx="11" cy="17" r="1.600" fill="#fff" stroke="#333" /><Plus /></I></SideTool>
      <SideTool arrow><I><BoxPkg /><Star /></I></SideTool>
      <div className="pl-[10px]"><SideTool><Sat badge /></SideTool></div>
    </div>
  );
}

function DockButtons() {
  const cls = "flex h-[11px] w-[11px] items-center justify-center rounded-[2px] border border-[#6a6a6a]";
  return (
    <div className="flex gap-1">
      <div className={cls}><svg width="7" height="7" viewBox="0 0 7 7" fill="none" stroke="#555"><path d="M2.500 2.500V.5H6.500V4.500H4.500M.5 2.500H4.500V6.500H.5Z" /></svg></div>
      <div className={cls}><svg width="7" height="7" viewBox="0 0 7 7" stroke="#444" strokeWidth="1.800"><path d="M.5 .5L6.500 6.500M6.500 .5L.5 6.500" /></svg></div>
    </div>
  );
}

function DockTitle({ t, w, className = "" }: { t: string; w: number; className?: string }) {
  return (
    <div className={"flex h-6 shrink-0 items-center justify-between " + className}>
      <Fit w={w} className="text-[18px]">{t}</Fit>
      <div className="-mt-px"><DockButtons /></div>
    </div>
  );
}

const Small = ({ children, w = 25 }: { children: React.ReactNode; w?: number }) => (
  <div className="flex shrink-0 items-center" style={{ width: w }}>{children}</div>
);
const Funnel = () => <I s={16}><path d="M2 2H22V5L14 13V23H10V13L2 5Z" fill="#4f86c6" /><path d="M2 1H22V5H2Z" fill="#f0dd50" stroke="#a99000" strokeWidth=".7" /></I>;
const TreeIcon = ({ down = false }) => (
  <I s={16}>
    <path d="M1 2H5M3 2V22" stroke="#777" strokeWidth="1.500" /><path d="M7 8H11V12H7ZM7 17H11V21H7Z" fill="#fff" stroke="#f38b17" strokeWidth="2" />
    <path d="M16.500 1L24 10H19.500V23H13.500V10H9Z" transform={down ? "rotate(180 16.5 12)" : ""} fill="#5585bd" stroke="#2f5c90" />
  </I>
);
const Dots = () => (
  <div className="flex h-2 shrink-0 items-center justify-center"><div className="h-1 w-[17px] bg-[radial-gradient(#b0b0b0_0.7px,transparent_0.8px)] bg-[length:3px_4px]" /></div>
);

/** Vertical scroll bar: end buttons with a light and a darker stretch between. */
function Scroll({ parts }: { parts: { h: number; c: string }[] }) {
  return (
    <div className="flex w-[22px] shrink-0 flex-col border-l border-[#b4b4b4] bg-[#f7f7f7]">
      <div className="flex h-5 shrink-0 items-center justify-center border-b border-[#b4b4b4] bg-white"><Up s={11} /></div>
      {parts.map((p, i) => (
        <div key={i} className="border-b border-[#b4b4b4]" style={{ height: p.h, background: p.c }} />
      ))}
      <div className="flex flex-1 items-center justify-center bg-white"><Down c="#5a5a5a" s={11} /></div>
    </div>
  );
}
const Tri = () => <svg width="7" height="11" viewBox="0 0 7 11" className="shrink-0"><path d="M.5 0V11L6.500 5.500Z" fill="#5a5a5a" /></svg>;
const Folder = ({ home = false }) => (
  <I s={22}><path d="M1.500 2H13L16 5H22.500V22H1.500Z" fill="#f0f0f0" stroke="#888" strokeWidth="1.500" />{home && <path d="M6 13L12 7L18 13M8 12V18H16V12" stroke="#333" strokeWidth="1.600" />}</I>
);

const browser: [React.ReactNode, string, number, boolean][] = [
  [<I key="s"><path d="M12 0L15 8.500L24 9L17 14.500L19.500 23.500L12 18.500L4.500 23.500L7 14.500L0 9L9 8.500Z" fill="#fbf07a" stroke="#d0a800" strokeWidth="1.300" /></I>, "Favoritos", 71, false],
  [<Book key="b" s={22} />, "Favoritos Espaciais", 146, true],
  [<Folder key="h" home />, "Início", 41, true],
  [<Folder key="c" />, "C:\\", 21, true],
  [<Folder key="d" />, "D:\\", 23, true],
];

function Browser() {
  return (
    <>
      <DockTitle t="Navegador" w={87} className="mt-[1px] pl-[5px] pr-[2px]" />
      <div className="flex h-[29px] shrink-0 items-center pl-[10px]">
        <Small><I s={16}><path d="M2 1H20V19H2Z" fill="#f7f7f7" stroke="#777" strokeWidth="1.500" /><circle cx="19" cy="20" r="5" fill="#5a9a5f" /><path d="M19 17V23M16 20H22" stroke="#fff" strokeWidth="1.500" /></I></Small>
        <Small><Refresh s={16} /></Small>
        <Small><Funnel /></Small>
        <Small><TreeIcon /></Small>
        <Small><I s={15}><circle cx="12" cy="12" r="11" fill="#5587c4" /><text x="8.500" y="19" fontSize="19" fontStyle="italic" fontWeight="700" fontFamily="Liberation Serif" fill="#fff">i</text></I></Small>
      </div>
      <div className="mt-[3px] flex h-[133px] shrink-0 border border-[#b0b0b0] bg-white">
        <div className="min-w-0 flex-1 overflow-hidden">
          {browser.map(([ic, t, w, tri]) => (
            <div key={t} className="flex h-[27px] items-center pl-[12px]">
              <div className="w-[20px]">{tri && <Tri />}</div>
              <div className="flex w-[26px] justify-center">{ic}</div>
              <Fit w={w} className="ml-[6px] mt-0.5 text-[17.5px]">{t}</Fit>
            </div>
          ))}
        </div>
        <Scroll parts={[{ h: 41, c: "#ffffff" }, { h: 50, c: "#e6e6e6" }]} />
      </div>
    </>
  );
}

const Check = ({ on = true }) => (
  <div className="flex h-[21px] w-[21px] shrink-0 items-center justify-center border border-[#b5b5b5] bg-white">
    {on && <svg width="15" height="15" viewBox="0 0 15 15" fill="none"><path d="M1.500 7.500L5.500 13L13 1" stroke="#000" strokeWidth="2.600" /></svg>}
  </div>
);

const layers: [string, string, number][] = [
  ["NASCENTE", "", 93], ["LAGOA", "#d3b23b", 61], ["PARQUE", "#a26d57", 71], ["MUNICIPIO_RMBH", "#ffffff", 159], ["BAIRRO", "#5584a6", 68],
];

function Layers() {
  return (
    <>
      <DockTitle t="Camadas" w={72} className="mt-[1px] pl-1 pr-[2px]" />
      <div className="flex h-[29px] shrink-0 items-center pl-[10px]">
        <Small><I s={16}><path d="M23 2L13 12" stroke="#b5813a" strokeWidth="4" /><path d="M2 11L9 8L16 15L9 23Z" fill="#e6a93a" /><path d="M2 10L8 8L16 16L14 19Z" fill="#d4452c" /><path d="M2 14L9 22L5 22Z" fill="#f7e04b" /></I></Small>
        <Small w={26}><I s={16}><path d="M2 10H14V21H2ZM6 6H18V17M10 2H21V12" stroke="#777" strokeWidth="1.600" /><path d="M12 4V14" stroke="#456" strokeWidth="2" /><Plus x={14} y={14} /></I></Small>
        <Small><I s={17}><path d="M0 9C5 2 15 2 21 9C15 15 5 15 0 9Z" fill="#eee" stroke="#888" strokeWidth="1.500" /><circle cx="11" cy="9" r="4.500" fill="#345b80" /><path d="M10 14H24L17 22Z" fill="#333" /></I></Small>
        <Small><Funnel /></Small>
        <Small w={23}><I s={16}><text x="0" y="15" fontSize="25" fontWeight="700" fontFamily="Liberation Serif" fill="#6b3c80">ε</text><path d="M13 12H24V22H20V16H17V22H13Z" fill="#ccc" stroke="#777" /></I></Small>
        <Small w={19}><Down s={11} /></Small>
        <Small><TreeIcon down /></Small>
        <Small><TreeIcon /></Small>
        <Small><I s={16}><path d="M2 1H20V19H2Z" fill="#f2f2f2" stroke="#888" strokeWidth="1.500" /><rect x="13" y="15" width="11" height="8" rx="2" fill="#ea4848" /><path d="M15 19H22" stroke="#fff" strokeWidth="2" /></I></Small>
      </div>
      <div className="mt-[3px] flex h-[134px] shrink-0 border border-[#b0b0b0] bg-white">
        <div className="-mt-[3px] min-w-0 flex-1">
          {layers.map(([t, c, w], i) => (
            <div key={t} className={"flex h-[27px] items-center pl-[33px] " + (i === 4 ? "bg-[#efefef]" : "")}>
              <Check />
              {c ? <div className="ml-[6px] h-[22px] w-[22px] shrink-0 border border-[#4b4b4b]" style={{ background: c }} />
                : <div className="ml-[12px] mr-[5px] h-3 w-3 shrink-0 rounded-full border border-[#304a34] bg-[#729b6f]" />}
              <Fit w={w} className="ml-[6px] mt-0.5 text-[17.5px] font-bold">{i === 4 ? <span className="underline decoration-1 underline-offset-2">{t}</span> : t}</Fit>
            </div>
          ))}
        </div>
        <Scroll parts={[{ h: 42, c: "#e6e6e6" }, { h: 49, c: "#ffffff" }]} />
      </div>
    </>
  );
}

const btn = "flex shrink-0 items-center justify-center rounded-[3px] border border-[#adadad] bg-gradient-to-b from-white to-[#efefef]";
const field = "flex shrink-0 items-center rounded-[3px] border border-[#a9a9a9] bg-white";

function PlaceSearch() {
  return (
    <>
      <DockTitle t="OSM place search..." w={153} className="mt-[1px] pl-1 pr-[2px]" />
      <div className="-mt-[3px] flex h-[27px] shrink-0 items-center pl-2 text-[16.5px]">
        <Fit w={119}>Name contains...</Fit>
        <div className={field + " ml-[9px] h-[27px] w-[142px]"} />
        <div className={btn + " ml-[9px] h-[26px] w-9"}>-&gt;</div>
      </div>
      <div className="mt-2 flex h-[27px] shrink-0 items-center pl-2 text-[16.5px]">
        <Check on={false} />
        <Fit w={103} className="ml-2">Limit to extent</Fit>
        <div className={btn + " ml-auto h-[26px] w-9"}>&lt;-</div>
      </div>
      <div className="ml-2 mt-2 flex h-[276px] shrink-0 flex-col border border-[#b0b0b0] bg-white">
        <div className="flex h-[27px] bg-[#efefef] text-[15.5px]">
          {([["Name", 42, "w-[82px] border-r"], ["Class", 36, "w-[74px] border-r"], ["Infos", 34, "w-[74px]"]] as const).map(([t, w, c]) => (
            <div key={t} className={"flex h-full items-center justify-center border-b border-[#b8b8b8] bg-gradient-to-b from-white to-[#efefef] pt-0.5 " + c}><Fit w={w}>{t}</Fit></div>
          ))}
        </div>
      </div>
      <div className="mt-2 flex h-[31px] shrink-0 items-center pl-[46px] text-[16.5px]">
        <div className={btn + " h-[26px] w-[33px]"}>...</div>
        <div className={btn + " ml-[47px] h-[31px] w-8"}>
          <I><path d="M0 0H24V24H0Z" fill="#e7e2cf" /><path d="M1 9L16 9L23 24H8Z" fill="#186a8e" /><path d="M3 10L12 20L20 22M8 10L10 17L17 14" stroke="#e3e83a" strokeWidth="2" /><circle cx="14.500" cy="7" r="6" fill="#197326" /><path d="M14.500 4V10M11.500 7H17.500" stroke="#fff" strokeWidth="2" /></I>
        </div>
        <div className={btn + " ml-[47px] h-[31px] w-8"}>
          <I><path d="M0 0H24V24H0Z" fill="#444" /><path d="M4 1L12 2L18 10L19 13L16 16L14 22L11 20L10 12L3 10L2 5ZM20 17L22 16L21 21Z" fill="#fff" /><circle cx="17" cy="7" r="6" fill="#197326" stroke="#ddd" strokeWidth=".5" /><path d="M17 4V10M14 7H20" stroke="#fff" strokeWidth="2" /></I>
        </div>
        <div className={btn + " ml-[47px] h-[31px] w-[87px] gap-1"}>
          <I><path d="M1 8H13V3L23.500 11.500L13 20V15H1Z" fill="#86bd1c" stroke="#5d8c10" strokeWidth=".8" /></I>
          <Fit w={41} className="mt-0.5">Zoom</Fit>
        </div>
      </div>
    </>
  );
}

/* ---------- map ---------- */

type Pt = [number, number];
const low = (pts: Pt[]): Pt[] => pts.map(([x, y]) => [x + 900, y + 1170]);
const line = (pts: Pt[]) => pts.map(([x, y]) => `${x},${y}`).join(" ");

const shore: Pt[] = [
  [70, 5], [78, 90], [88, 180], [95, 235], [108, 275], [118, 305], [133, 350], [145, 380], [158, 405], [180, 432], [200, 460], [219, 482], [225, 540], [234, 592],
  [228, 620], [217, 652], [211, 695], [224, 728], [223, 770], [233, 800], [242, 825], [262, 855], [297, 893], [328, 917], [365, 930], [400, 933],
  [445, 939], [465, 944], [510, 944], [545, 939], [585, 926], [615, 907], [655, 880], [685, 852], [700, 830], [740, 795], [768, 770], [785, 760],
  [795, 748], [802, 722], [814, 697], [828, 671], [850, 673], [875, 680], [908, 698], [935, 727], [950, 748], [958, 775], [966, 820], [977, 857],
  [1003, 881], [1010, 895], [1025, 911], [1057, 924], [1080, 942], [1098, 969], [1130, 995], [1158, 1030], [1170, 1070], [1183, 1110], [1189, 1140],
  ...low([[291, 0], [292, 38], [300, 75], [315, 108], [325, 145], [330, 190], [340, 215], [350, 238], [347, 252], [336, 266], [308, 279], [290, 297], [271, 320],
    [265, 340], [263, 360], [268, 375], [290, 402], [320, 437], [325, 470], [343, 515], [343, 540], [325, 558], [326, 590], [335, 612], [352, 640],
    [375, 670], [390, 700], [414, 735], [421, 770], [423, 800], [441, 824], [447, 855], [432, 880], [408, 887], [401, 895], [403, 940], [399, 962],
    [390, 985], [397, 1002], [419, 1013], [428, 1040], [432, 1080], [440, 1110], [450, 1132], [480, 1147], [500, 1170], [515, 1195], [520, 1238], [545, 1256]]),
];
const east: Pt[] = [
  [950, 748], [1010, 690], [1035, 645], [1060, 592], [1066, 570], [1125, 602], [1190, 645], [1243, 696], [1275, 755], [1305, 828], [1315, 910],
  [1330, 980], [1345, 1040], [1358, 1110],
  ...low([[473, 0], [485, 72], [487, 215], [500, 275], [500, 500], [504, 560], [516, 608], [522, 632], [552, 690], [580, 760], [595, 825], [603, 900],
    [608, 915], [644, 1022], [400, 1060], [200, 900], [150, 300]]),
];
const south = low([[430, 1043], [478, 1028], [585, 1020], [688, 1028], [763, 1101], [778, 1260], [400, 1260]]);

function MapCanvas() {
  return (
    <div className="w-[950px] shrink-0 border border-[#a9a9a9] bg-white">
      <svg viewBox="485 193 948 804" preserveAspectRatio="none" className="block h-full w-full">
        <g transform="translate(660 190) scale(0.33333)" stroke="#232323" strokeWidth="3.8" strokeLinejoin="round">
          <path d="M72 5L80 5L106 270L95 240Z" fill="#d794a2" />
          <polygon points="613,907 681,702 757,693 816,696 850,760 740,900" fill="#f4a6b3" />
          <polygon points={line(east)} fill="#f4a6b3" />
          <polygon points={line(south)} fill="#f4a6b3" />
          <path d="M1252 1810L1416 1778M1299 2132L1508 2085" />
          <polygon points="500,943 530,938 555,925 575,907 583,885 598,850 618,826 588,922 560,936" fill="#8d5a99" />
          <path d="M228 728L229 765L240 805L258 840L297 891" fill="none" />
          <polygon points={`-540,5 ${line(shore)} -540,2426`} fill="#ff9e17" />
        </g>
      </svg>
    </div>
  );
}

/* ---------- processing toolbox ---------- */

const Gdal = () => (
  <I><circle cx="15" cy="12" r="9" fill="#4fb4e6" /><path d="M10 6L16 5L18 9L13 13L9 10ZM18 12L22 10V17Z" fill="#2f8a4b" /><path d="M1 6L11 1M5 2L8 6" stroke="#333" strokeWidth="2.500" /><text x="0" y="22.500" fontSize="10" fontWeight="700" fontFamily="Open Sans" fill="#000" textLength="22" lengthAdjust="spacingAndGlyphs">GDAL</text></I>
);
const Grass = () => (
  <I><path d="M12 1L21 10L12 19L3 10Z" fill="#fff" stroke="#666" /><path d="M3 13L12 22L21 13" stroke="#222" strokeWidth="1.500" /><path d="M12 17V5M12 16L6 9M12 16L18 9M12 16L9 6" stroke="#1e9e2c" strokeWidth="1.500" /><path d="M5 23H20" stroke="#888" /></I>
);
const Net = () => (
  <I>
    <path d="M11 0V4Q11 11 4 11H0V9Q8 9 8 0Z" fill="#b8cc10" /><path d="M6 3V4Q6 7 1 7" stroke="#e0b820" strokeWidth="2" />
    <path d="M13 0V4Q13 11 20 11H24V9Q16 9 16 0Z" fill="#ee7416" /><path d="M18 3Q18 7 23 7" stroke="#f0a020" strokeWidth="2" />
    <path d="M11 24V20Q11 13 4 13H0V15Q8 15 8 24Z" fill="#2aa08a" /><path d="M1 17Q6 17 6 22" stroke="#5cc0a8" strokeWidth="2" />
    <path d="M13 24V20Q13 13 20 13H24V15Q16 15 16 24Z" fill="#7cb8dc" /><path d="M18 22Q18 17 22 17" stroke="#2f8cc4" strokeWidth="2" />
  </I>
);

const tree: [string, number, React.ReactNode?][] = [
  ["Usado recentemente", 163, <Clock key="k" />], ["Análise de dados Raster", 190], ["Análise de rede", 121], ["Análise vetorial", 119],
  ["Base de Dados", 118], ["Cartografia", 88], ["Criação de vetor", 129], ["Ferramentas de arquivo", 187], ["Ferramentas de camada", 189],
  ["Ferramentas raster", 146], ["Geometria do vetor", 155], ["Interpolação", 99], ["Plots", 39], ["Raster creation", 117],
  ["Raster de análise do terreno", 221], ["Selecionar vetor", 126], ["Sobreposição de vetor", 180], ["Tabela de vetores", 137],
  ["Vector tiles", 86], ["Vetor geral", 86], ["GDAL", 45, <Gdal key="g" />], ["GRASS", 55, <Grass key="r" />], ["Lat Lon tools", 102, <Pages key="p" />],
  ["Networks", 74, <Net key="n" />], ["ORS Tools", 81, <Hexagon key="h" />], ["Pelias Geocoding", 134, null], ["qgis2web", 77, <Gear key="q" />],
];

function SearchIcon({ s = 14 }) {
  return <svg width={s} height={s} viewBox="0 0 14 14" fill="none" stroke="#8a8a8a" strokeWidth="1.300"><circle cx="5.500" cy="5.500" r="4.500" /><path d="M9 9L13.500 13.500" strokeWidth="2" /></svg>;
}

function Toolbox() {
  return (
    <div className="flex min-w-0 flex-1 flex-col">
      <DockTitle t="Caixa de Ferramentas de processamento" w={320} className="mt-[1px] pl-1 pr-[2px]" />
      <div className="flex h-[29px] shrink-0 items-center pl-[10px]">
        <Small w={26}><I s={17}><circle cx="8" cy="8" r="6" stroke="#cf2424" strokeWidth="5" strokeDasharray="3 1.700" /><circle cx="8" cy="8" r="4" stroke="#cf2424" strokeWidth="3" /><circle cx="17" cy="13" r="4" fill="#777" /><circle cx="12" cy="19" r="4" fill="#9fbce8" /><path d="M11 13H24L17.500 21Z" fill="#333" /></I></Small>
        <Small w={24}><I s={17}><path d="M11 1C7 1 6 2.500 6 4.500V7H12V8H4C2 8 1 10 1 12.500C1 15 2 17 4 17H6V14C6 12 7 11 9 11H14C16 11 17 10 17 8V4.500C17 2 15 1 11 1Z" fill="#3672a5" /><path d="M7 23V15H22V20Q20 23 15 23Z" fill="#ffd343" /><path d="M10 12H24L17 20Z" fill="#54461c" /></I></Small>
        <Small><I s={17}><circle cx="12" cy="12" r="10.500" fill="#f4f4f4" stroke="#888" strokeWidth="1.500" /><path d="M12 4V12L17 15" stroke="#888" strokeWidth="1.500" /></I></Small>
        <Small w={24}><I s={17}><path d="M4 1H16L20 5V23H4Z" fill="#f4f4f4" stroke="#999" strokeWidth="1.500" /><path d="M7 8H17M7 12H17M7 16H17M7 20H13" stroke="#999" strokeWidth="1.500" /></I></Small>
        <Small w={10}><div className="h-3 w-px bg-[#ccc]" /></Small>
        <Small w={26}><I s={17}><path d="M2 2H17V16H8L2 18Z" fill="#f7e03f" stroke="#c9ac10" /><path d="M20 7L23 9L14 22L11 23L12 19Z" fill="#e8c53a" stroke="#9a7c10" /></I></Small>
        <Small w={9}><div className="h-3 w-px bg-[#ccc]" /></Small>
        <Small><I s={18}><path d="M10 10L21 22L23 20L13 8Z" fill="#e8c95a" stroke="#7a6420" /><path d="M2 5A4.500 4.500 0 0 0 9 11L11 9A4.500 4.500 0 0 0 6 1L8 5L6 7Z" fill="#eee" stroke="#777" /></I></Small>
      </div>
      <div className={field + " mt-[3px] h-[27px] gap-2 pl-2 text-[16.5px] text-[#7b7b7b]"}>
        <SearchIcon /><Fit w={60} className="mt-px">Buscar...</Fit>
      </div>
      <div className="flex min-h-0 flex-1 border border-t-[#b0b0b0] border-[#b0b0b0] bg-white">
        <div className="min-w-0 flex-1 overflow-hidden">
          {tree.map(([t, w, ic]) => (
            <div key={t} className={"flex items-center pl-[12px] " + (ic === null ? "h-[26px]" : "h-[27px]")}>
              <Tri />
              {ic !== null && <div className="-mt-0.5 ml-[12.5px] flex w-[26px] justify-center">{ic === undefined ? <QLogo s={22} /> : ic}</div>}
              <Fit w={w} className={(ic === null ? "ml-[14px]" : "ml-[5.5px]") + " mt-[3px] text-[17.5px]"}>{t}</Fit>
            </div>
          ))}
        </div>
        <Scroll parts={[{ h: 608, c: "linear-gradient(90deg,#fff,#f1f1f1)" }, { h: 71, c: "#e6e6e6" }]} />
      </div>
    </div>
  );
}

/* ---------- status bar ---------- */

function Spin({ v, w, vw, split }: { v: string; w: number; vw: number; split: number }) {
  return (
    <div className={field + " h-[27px]"} style={{ width: w }}>
      <Fit w={vw} className="ml-1 mt-0.5">{v}</Fit>
      <div className="ml-auto flex h-full flex-col items-center justify-center gap-[5px] border-l border-[#b4b4b4]" style={{ width: split }}><Up s={10} /><Down c="#5a5a5a" s={10} /></div>
    </div>
  );
}

function StatusBar() {
  return (
    <div className="flex h-9 shrink-0 items-center bg-[#efefef] pl-1 text-[16.5px]">
      <div className={field + " h-[27px] w-[383px] gap-[6px] pl-2 text-[#7b7b7b]"}><SearchIcon /><Fit w={215} className="mt-0.5">Escreva para localizar (Ctrl+K)</Fit></div>
      <Fit w={85} className="ml-[381px] mt-0.5">Coordenada</Fit>
      <div className={field + " ml-[3px] h-[27px] w-[137px] pl-[6px]"}><Fit w={122} className="mt-0.5">616988,7800133</Fit></div>
      <div className="-mt-0.5 ml-1"><I><path d="M3 4Q7 -1 12 5L14 12L9 15L3 10Z" fill="#111" /><path d="M6 4L8 10M10 4L11 9" stroke="#fff" strokeWidth="1.500" /><circle cx="14" cy="17" r="6" fill="#fff" stroke="#111" strokeWidth="1.800" /><circle cx="14" cy="17" r="2" stroke="#111" strokeWidth="1.500" /><path d="M14 6L20 2M16 9L22 5M2 14L7 20L12 22" stroke="#111" strokeWidth="1.700" strokeDasharray="3 1" /></I></div>
      <Fit w={43} className="ml-[13px] mt-0.5">Escala</Fit>
      <div className={field + " ml-[3px] h-[27px] w-[114px] overflow-hidden pl-1"}><Fit w={50} className="mt-0.5">1:7321</Fit><div className="ml-auto flex h-full w-[29px] items-center justify-center bg-[#f3f3f3]"><Down c="#5a5a5a" s={12} /></div></div>
      <div className="ml-3"><svg width="19" height="24" viewBox="0 0 19 24" fill="none"><path d="M4 11V6.500Q4 1.500 9.500 1.500Q15 1.500 15 6.500V11" stroke="#8b8b8b" strokeWidth="2.200" /><rect x=".5" y="10.500" width="18" height="12.500" rx="1.500" fill="#666" /></svg></div>
      <Fit w={34} className="ml-[10px] mt-0.5">Lupa</Fit>
      <div className="ml-[3px]"><Spin v="100%" w={105} vw={43} split={21} /></div>
      <Fit w={56} className="ml-[9px] mt-0.5">Rotação</Fit>
      <div className="ml-[9px]"><Spin v="0,0 °" w={101} vw={36} split={21} /></div>
      <div className="ml-[6px]"><Check /></div>
      <Fit w={75} className="ml-2 mt-0.5">Renderizar</Fit>
      <div className="ml-[16px] flex"><GreyGlobe /></div>
      <Fit w={129} className="ml-[5px] mt-0.5">SRC desconhecido</Fit>
      <div className="ml-[23px] flex"><I><path d="M12 1C18 1 23 5 23 10.500C23 14 21 17 20 18L23 23L15 19.500C6 21 1 16 1 10.500C1 5 6 1 12 1Z" fill="#5d5d5d" /><path d="M5 9H8V12H5ZM10.500 9H13.500V12H10.500ZM16 9H19V12H16Z" fill="#fff" /></I></div>
      <div className="ml-[10px] flex"><I s={23}><path d="M2 11H7Q5 5 9 5Q13 5 12 11H17V15Q22 14 22 17Q22 20 17 19V23H12Q12 19 9 19Q7 19 7 23H2V18Q5 17 5 15Q4 14 2 14Z" fill="#999" stroke="#666" /><path d="M18 0L20 4L24 5L20 7L19 11L16 8L12 8L15 5L13 1L17 3Z" fill="#fff" stroke="#888" /></I></div>
    </div>
  );
}

/* ---------- task bar ---------- */

function Task({ children, w = "w-12", run = "", on = false }: { children: React.ReactNode; w?: string; run?: string; on?: boolean }) {
  return (
    <div className={"flex h-full shrink-0 flex-col items-center justify-between " + w + (on ? " bg-[#f1f1f1]" : "")}>
      <div className="h-px" />
      <div className="mt-[2px] flex h-6 items-center">{children}</div>
      <div className={"h-[3px] " + (run || "w-0")} />
    </div>
  );
}
const Office = ({ c, d, l }: { c: string; d: string; l: string }) => (
  <I><path d="M6 1H23V23H6Z" fill={c} /><path d="M6 12H23V23H6Z" fill={d} /><rect x="0" y="5" width="14" height="14" rx="1" fill={d} stroke="#0003" /><text x="7" y="16" textAnchor="middle" fontSize="12" fontWeight="700" fontFamily="Open Sans" fill="#fff">{l}</text></I>
);
const N47 = "w-[46.9px]";

function TaskBar() {
  return (
    <div className="flex h-[46px] shrink-0 items-center bg-[#d4d4d4]">
      <Task w="w-[54px]"><I><path d="M0 3.500L10 2V11.500H0ZM11 2L24 0V11.500H11ZM0 12.500H10V22L0 20.500ZM11 12.500H24V24L11 22Z" fill="#000" /></I></Task>
      <Task w="w-[54px]"><I><circle cx="15" cy="8.500" r="8" stroke="#000" strokeWidth="1.400" /><path d="M9.500 14.500L0 24" stroke="#000" strokeWidth="1.600" /></I></Task>
      <Task w="w-[54px]"><I><circle cx="12" cy="12" r="10" stroke="#000" strokeWidth="3.600" /></I></Task>
      <Task w="w-[54px]"><I><path d="M1 0V3H16V0M1 24V20H16V24M1 6.500H16V17H1ZM22 0V5M22 11V24" stroke="#000" strokeWidth="1.400" /><circle cx="22" cy="8" r="1.800" fill="#000" /></I></Task>
      <Task w="w-[52px]"><I className="translate-x-0.5"><path d="M3 0H21V24H3Z" fill="#444" /><path d="M5.500 2.500H18.500V6H5.500Z" fill="#ddd" /><path d="M6 10.500H18M6 15H18M6 19.500H18" stroke="#ddd" strokeWidth="2" strokeDasharray="2.500 2" /></I></Task>
      <Task run="w-[34px] bg-[#0078d7]"><I><path d="M1 3H10L12 6H23V9H1Z" fill="#e0a110" /><path d="M1 7H23V21H1Z" fill="#ffd75e" /><path d="M5 22V15H19V22H15V18H9V22Z" fill="#3a97dd" /></I></Task>
      <Task><I><circle cx="12" cy="12" r="11" stroke="#6cb8e4" strokeWidth="1.800" /><circle cx="12" cy="12" r="4" fill="#57a9dc" /></I></Task>
      <Task><I><path d="M3 2H22V17L17 22H3Z" fill="#f7b50c" /><path d="M22 17H17V22Z" fill="#fff0b0" /><path d="M10 14C6.500 11 8 5 12.500 5C17 5 18.500 11 15 14V17H10Z" stroke="#fff" strokeWidth="1.600" /></I></Task>
      <Task><I><path d="M0 0H24V24H0Z" fill="#fff" /><path d="M9 5L12 5C16 6 18 7 18 11C18 16 17 19 14 19C11 19 12 16 14 16L13 14C10 15 6 14 6 9Z" fill="#12a815" /></I></Task>
      <Task><I><circle cx="12" cy="12" r="11" fill="#f8d80c" /><path d="M5 16C4 9 9 4 14 6C20 8 21 15 17 17C13 19 7 19 5 16ZM6 14L10 11L12 14L17 9" stroke="#333" strokeWidth="1.600" /></I></Task>
      <Task><I><path d="M1 23L3 17A11 11 0 1 1 8 22Z" fill="#fff" /><path d="M3.500 20.500L5 16A9 9 0 1 1 8.500 19.500Z" fill="#24c355" /><path d="M8 6L10 10L9 12Q11 15 14 16L15 14L18 15.500Q17 19 13 18Q7 15 6.500 9Z" fill="#fff" /></I></Task>
      <Task><I><circle cx="12" cy="12" r="11.500" fill="#555" /><path d="M2 6A11.500 11.500 0 0 1 23 8H12L7 13Z" fill="#d94435" /><path d="M1 11Q1 8 2 6L8 15H1Z" fill="#2ea14e" /><path d="M12 8H23.500V14H16Z" fill="#f5c42f" /><circle cx="12" cy="11" r="5" fill="#4285f4" stroke="#fff" strokeWidth="1.300" /><path d="M1 14H23Q20 24 12 24Q4 24 1 14Z" fill="#444" /><text x="7" y="20" fontSize="5" fontFamily="Open Sans" fill="#ccc">Beta</text></I></Task>
      <Task run="w-[34px] border-r-[12px] border-[#5ba9e8] bg-[#0078d7]"><I><circle cx="12" cy="12" r="11.500" fill="#0f6cbd" /><path d="M1 11C2 3 8 0 14 1C21 2 25 9 23 14C20 17 15 16 15 14C18 9 12 6 8 7Q4 8 1 11Z" fill="#3cc6a4" /><path d="M1 11Q6 5 11 8C7 11 8 18 14 20Q18 21 21 19C14 27 0 24 1 11Z" fill="#1278cf" /><path d="M14 8Q18 12 14.500 15Q17 18 22 15L12 16Z" fill="#e4f2fa" /></I></Task>
      <Task><I><circle cx="12" cy="12" r="11" fill="#f7b41a" /><path d="M2 7Q7 0 14 1Q20 2 22 8H12Z" fill="#e8960c" /><path d="M22 8Q26 18 14 23L18 12Z" fill="#fdd65b" /><circle cx="12" cy="12" r="4.500" fill="#fbc94a" stroke="#fff" strokeWidth="1.300" /></I></Task>
      <Task><I><path d="M0 0H24V24H0Z" fill="#a50d15" /><path d="M0 14L24 4V24H0Z" fill="#bf2028" /><text x="3" y="8.500" fontSize="7.500" fontWeight="700" fontFamily="Open Sans" fill="#fff" textLength="14">PDF</text><path d="M9 21L11 16L21 7L23 10L14 19ZM14 22L23 14" stroke="#fff" strokeWidth="1.800" /></I></Task>
      <Task><Office c="#2cb673" d="#107c41" l="X" /></Task>
      <Task><Office c="#3a9be6" d="#1857b6" l="W" /></Task>
      <Task run="w-[34px] bg-[#0078d7]"><I><circle cx="13" cy="12" r="11" fill="#e8704b" /><path d="M13 1A11 11 0 0 1 24 12H13Z" fill="#ff9a78" /><rect x="0" y="5" width="13" height="14" rx="1" fill="#c43e1c" /><text x="6.500" y="16" textAnchor="middle" fontSize="12" fontWeight="700" fontFamily="Open Sans" fill="#fff">P</text></I></Task>
      <Task w={N47}><I><path d="M2 1H23V23H2Z" fill="#1c1780" /><path d="M2 1H23V8L2 14Z" fill="#28205a" /><path d="M5 4L9 8M17 3L20 6" stroke="#cc3" strokeWidth="1.500" /><text x="4" y="18" fontSize="9" fontWeight="700" fontFamily="Liberation Serif" fill="#e8a126">T<tspan dy="3">E</tspan><tspan dy="-3">X</tspan></text></I></Task>
      <Task w={N47} run="w-[34px] bg-[#0078d7]"><I><circle cx="12" cy="12" r="12" fill="#75aadb" /><text x="6.500" y="18" fontSize="17" fontFamily="Liberation Serif" fill="#fff">R</text></I></Task>
      <Task w={N47}><I><path d="M1 3H23V22H1Z" fill="#222" stroke="#999" /><path d="M1 3H23V6H1Z" fill="#bbb" /><text x="3" y="11" fontSize="6" fontFamily="Liberation Mono" fill="#aaa">C:\_</text></I></Task>
      <Task w={N47}><I><path d="M12 0L18 6L12 12L6 6Z" fill="#e8907c" /><path d="M18 6L24 12L18 18L12 12Z" fill="#8ecb6b" /><path d="M6 6L12 12L6 18L0 12Z" fill="#75a8e8" /><path d="M12 12L18 18L12 24L6 18Z" fill="#f0d468" /><path d="M9 3L13 7V17M13 8L18 12" stroke="#555" strokeWidth="1.500" /><circle cx="13" cy="17" r="1.700" fill="#555" /></I></Task>
      <Task w={N47}><I><path d="M1 2H22V21H1Z" fill="#fff" stroke="#888" /><path d="M1 1H22V5H1Z" fill="#1582d4" /><path d="M4 9H9M4 12H10M4 15H8" stroke="#888" /><g transform="translate(8 7) scale(.72)"><path d="M11 1C7 1 6 2.500 6 4.500V7H12V8H4C2 8 1 10 1 12.500C1 15 2 17 4 17H6V14C6 12 7 11 9 11H14C16 11 17 10 17 8V4.500C17 2 15 1 11 1Z" fill="#3672a5" /><path d="M12 23C16 23 17 21.500 17 19.500V17H11V16H19C21 16 22 14 22 12C22 9.500 21 8 19 8H18V10C18 12 17 13 15 13H10C8 13 7 14 7 16V19.500C7 22 9 23 12 23Z" fill="#ffd343" /></g></I></Task>
      <Task w={N47}><I><circle cx="12" cy="12" r="11" fill="#6f2ca0" /><path d="M5 5L9 7H15L19 5V11Q20 18 12 18Q4 18 5 11Z" fill="#f2ecf6" /></I></Task>
      <Task w={N47}><I><circle cx="12" cy="12" r="12" fill="#111c26" /><path d="M12 4C17 4 19 9 17 14L15 19M12 4C7 4 5 9 7 14L9 19M12 9V21M10 10L11 18M14 10L13 18" stroke="#1b9e90" strokeWidth="2.200" /></I></Task>
      <Task w={N47}><I><circle cx="11" cy="11" r="11" fill="#1d5f86" /><path d="M2 9L8 5L14 8L10 18Z" fill="#3f8c55" /><circle cx="12" cy="10" r="6.500" fill="#a8e2f5" stroke="#eee" strokeWidth="1.500" /><path d="M17 16L23 22" stroke="#c87a30" strokeWidth="3" /></I></Task>
      <Task w={N47}><I><path d="M1 7L7 3L12 9L8 15L2 14Z" fill="#5b3fa8" /><path d="M4 16L12 4L18 12L12 22Z" fill="#2fc45c" /><path d="M5 17L10 8L13 18L8 22Z" fill="#2b8fe8" /><path d="M10 8L14 5L15 16L12 20Z" fill="#f4e02a" /><path d="M12 6L18 1L24 9L17 16Z" fill="#f08418" /><text x="1" y="13" fontSize="9" fontWeight="700" fontFamily="Open Sans" fill="#222" textLength="22" lengthAdjust="spacingAndGlyphs">GeoDa</text></I></Task>
      <Task w={N47}><I><path d="M1 3H22V23H1Z" fill="#eee" /><path d="M1 3H12L6 14H1Z" fill="#1e9e5a" /><path d="M1 23L12 12L22 23Z" fill="#4a86e8" /><path d="M1 20L14 8" stroke="#f6c83a" strokeWidth="3" /><text x="3" y="12" fontSize="9" fontWeight="700" fontFamily="Open Sans" fill="#fff">8</text><path d="M18 14L13 6A5 5 0 1 1 23 6Z" fill="#e34133" /><circle cx="18" cy="5" r="1.700" fill="#7d1d14" /></I></Task>
      <Task w={N47}><I><path d="M0 0H24V24H0Z" fill="#57b0dc" /><path d="M0 19H24V24H0Z" fill="#123" /><path d="M0 0H8V24H0Z" fill="#1c5f8c" /><circle cx="11" cy="4" r="2.500" fill="#000" /><path d="M10 6L14 9L11 16L17 12L19 18H23V21H5L7 12Z" fill="#000" /></I></Task>
      <Task w={N47} run="w-[46px] bg-[#0078d7]" on><QLogo /></Task>
      <Task w={N47} run="w-[34px] bg-[#0078d7]"><I><path d="M11 3C18 3 21 8 20 12C19 15 16 13 15 16C15 21 10 22 6 20C0 17 0 3 11 3Z" fill="#b5d5ea" stroke="#6d9fc4" />{[[6, 8, "#e33"], [11, 7, "#f90"], [15, 9, "#3a3"], [5, 13, "#38c"], [8, 17, "#a3a"]].map(([x, y, c]) => <circle key={String(c)} cx={x} cy={y} r="1.800" fill={String(c)} />)}<path d="M21 2L15 15L13 22" stroke="#d48a3c" strokeWidth="2.500" /><path d="M22 0L20 5" stroke="#e8b46a" strokeWidth="4" /></I></Task>
      <div className="flex-1" />
      <div className="flex h-full shrink-0 items-center">
        {[
          <I key="a"><path d="M3 17L12 7L21 17" stroke="#000" strokeWidth="1.500" /></I>,
          <I key="b"><path d="M5 18Q0 18 1 13Q2 10 5 10Q6 4 12 4Q18 4 19 10Q23 11 23 15Q23 18 19 18Z" fill="#777" stroke="#333" /><circle cx="17" cy="18" r="6" fill="#d9262c" /><path d="M14.500 15.500L19.500 20.500M19.500 15.500L14.500 20.500" stroke="#fff" strokeWidth="1.500" /></I>,
          <I key="c"><path d="M5 7H22V18H5Z" stroke="#000" strokeWidth="1.500" /><path d="M8 9H20V16H8ZM22 10H24V15H22ZM0 5H7V10Q6 12 3.500 12Q1 12 0 10ZM1.500 2V5M5.500 2V5M3.500 12V16" fill="#000" stroke="#000" strokeWidth=".8" /></I>,
          <I key="d"><path d="M1 9H5L10 4V20L5 15H1ZM13 9Q15 12 13 15M16 7Q19 12 16 17M19 5Q23 12 19 19" stroke="#000" strokeWidth="1.300" /></I>,
          <I key="e"><path d="M6 2L12 6L6 10L0 6ZM18 2L24 6L18 10L12 6ZM6 10L12 14L6 18L0 14ZM18 10L24 14L18 18L12 14ZM12 15L17 18.500L12 22L7 18.500Z" fill="#000" /></I>,
          <I key="f"><path d="M5 19Q0 18 1 14Q2 11 5 11Q6 4 12 4Q18 4 19 10Q24 11 23.500 15Q23 19 19 19Z" fill="#f7f7f7" /><path d="M12 17V9M8.500 12L12 8.500L15.500 12" stroke="#bbb" strokeWidth="2.200" /></I>,
        ].map((n, i) => <div key={i} className="flex w-9 justify-center">{n}</div>)}
        <Fit w={33} className="ml-[10px] mt-px text-[17px]">ENG</Fit>
        <Fit w={43} className="ml-[21px] mt-px text-[17px]">11:00</Fit>
        <div className="ml-[28px] mr-[30px] flex"><I><path d="M0 1H24V20H15L11.500 24L8 20H0Z" fill="#000" /><path d="M5 6H19M5 10H19M5 14H14" stroke="#fff" strokeWidth="1.300" /></I></div>
        <div className="mr-[7px] h-full w-px bg-[#9c9c9c]" />
      </div>
    </div>
  );
}

export default function App() {
  return (
    <div className="flex h-[1080px] w-[1920px] flex-col overflow-hidden bg-[#efefef] font-['Open_Sans','Noto_Sans',sans-serif] leading-[1.3] text-black">
      <TitleBar />
      <MenuBar />
      <ToolbarOne />
      <ToolbarTwo />
      <ToolbarThree />
      <div className="flex min-h-0 flex-1">
        <SideBar />
        <div className="flex w-[413px] shrink-0 flex-col">
          <Browser />
          <Dots />
          <Layers />
          <Dots />
          <PlaceSearch />
        </div>
        <div className="w-[9px] shrink-0" />
        <MapCanvas />
        <div className="flex w-[9px] shrink-0 items-center justify-center"><div className="h-[17px] w-1 bg-[radial-gradient(#b0b0b0_0.7px,transparent_0.8px)] bg-[length:4px_3px]" /></div>
        <Toolbox />
      </div>
      <StatusBar />
      <TaskBar />
    </div>
  );
}
